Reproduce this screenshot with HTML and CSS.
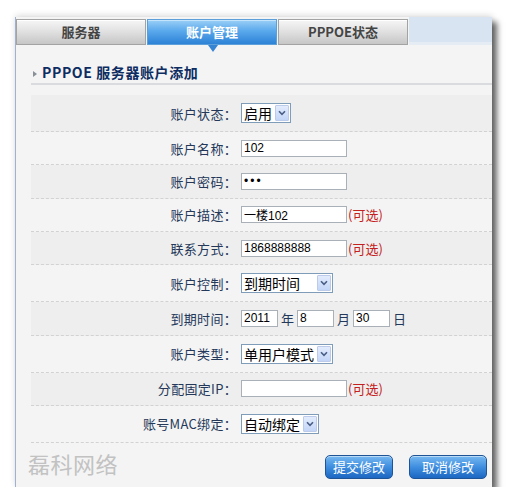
FILE: index.html
```html
<!DOCTYPE html>
<html lang="zh-CN">
<head>
  <meta charset="UTF-8" />
  <title>PPPOE 服务器账户添加</title>
  <link rel="stylesheet" href="styles.css">
</head>
<body>
  <div class="panel">
    <div class="tabs">
      <a class="tab" href="#">服务器</a>
      <a class="tab active" href="#">账户管理</a>
      <a class="tab" href="#">PPPOE状态</a>
      <div class="tab-fill"></div>
    </div>

    <div class="content">
      <h2 class="title"><span class="arrow-mark"></span>PPPOE 服务器账户添加</h2>

      <form class="form">
        <div class="row tall">
          <label>账户状态：</label>
          <div class="field">
            <span class="dd w50"><select><option>启用</option></select><span class="dd-btn"><svg width="8" height="6" viewBox="0 0 8 6"><path d="M1 1.2 L4 4.4 L7 1.2" fill="none" stroke="#4a5f86" stroke-width="1.6"/></svg></span></span>
          </div>
        </div>
        <div class="row">
          <label>账户名称：</label>
          <div class="field"><input class="txt" type="text" value="102"></div>
        </div>
        <div class="row">
          <label>账户密码：</label>
          <div class="field"><input class="txt" type="password" value="abc"></div>
        </div>
        <div class="row">
          <label>账户描述：</label>
          <div class="field"><input class="txt" type="text" value="一楼102"><span class="opt">(可选)</span></div>
        </div>
        <div class="row">
          <label>联系方式：</label>
          <div class="field"><input class="txt" type="text" value="1868888888"><span class="opt">(可选)</span></div>
        </div>
        <div class="row tall">
          <label>账户控制：</label>
          <div class="field">
            <span class="dd w92"><select><option>到期时间</option></select><span class="dd-btn"><svg width="8" height="6" viewBox="0 0 8 6"><path d="M1 1.2 L4 4.4 L7 1.2" fill="none" stroke="#4a5f86" stroke-width="1.6"/></svg></span></span>
          </div>
        </div>
        <div class="row">
          <label>到期时间：</label>
          <div class="field date">
            <input class="txt short" type="text" value="2011"><span class="unit">年</span>
            <input class="txt short" type="text" value="8"><span class="unit">月</span>
            <input class="txt short" type="text" value="30"><span class="unit">日</span>
          </div>
        </div>
        <div class="row tall">
          <label>账户类型：</label>
          <div class="field">
            <span class="dd w92"><select><option>单用户模式</option></select><span class="dd-btn"><svg width="8" height="6" viewBox="0 0 8 6"><path d="M1 1.2 L4 4.4 L7 1.2" fill="none" stroke="#4a5f86" stroke-width="1.6"/></svg></span></span>
          </div>
        </div>
        <div class="row">
          <label>分配固定IP：</label>
          <div class="field"><input class="txt" type="text" value=""><span class="opt">(可选)</span></div>
        </div>
        <div class="row tall">
          <label>账号MAC绑定：</label>
          <div class="field">
            <span class="dd w78"><select><option>自动绑定</option></select><span class="dd-btn"><svg width="8" height="6" viewBox="0 0 8 6"><path d="M1 1.2 L4 4.4 L7 1.2" fill="none" stroke="#4a5f86" stroke-width="1.6"/></svg></span></span>
          </div>
        </div>
      </form>

      <div class="footer">
        <span class="brand">磊科网络</span>
        <div class="btns">
          <button class="btn submit" type="button">提交修改</button>
          <button class="btn" type="button">取消修改</button>
        </div>
      </div>
    </div>
  </div>
</body>
</html>
```

FILE: styles.css
```css
* {
  margin: 0;
  padding: 0;
  box-sizing: border-box;
}

body {
  background: #fff;
  font-family: "Noto Sans CJK SC", "Liberation Sans", sans-serif;
  font-size: 13px;
  color: #24385a;
}

.panel {
  margin: 17px 0 0 15px;
  width: 477px;
  background: #f4f4f4;
  border-left: 1px solid #9db3cf;
  box-shadow: 5px 5px 6px rgba(0, 0, 0, 0.6), 0 -2px 6px rgba(0, 0, 0, 0.12);
}

/* tabs */
.tabs {
  display: flex;
  gap: 1px;
  height: 28px;
  align-items: flex-end;
  background: #f4f4f4;
}

.tab {
  position: relative;
  width: 130px;
  height: 26px;
  line-height: 24px;
  text-align: center;
  text-decoration: none;
  font-weight: bold;
  font-size: 13px;
  color: #444;
  border: 1px solid #a3a3a3;
  background: linear-gradient(#f6f6f6, #e2e2e2 45%, #c6c6c6);
  box-shadow: inset 0 1px 0 #fff;
}

.tab.active {
  color: #fff;
  border-color: #5d9fd8;
  background: linear-gradient(#9bd0f7, #5aa9ec 45%, #2c82d6);
  box-shadow: inset 0 1px 0 #c4e4fb;
}

.tab.active::after {
  content: "";
  position: absolute;
  left: 60px;
  bottom: -8px;
  border-left: 5px solid transparent;
  border-right: 5px solid transparent;
  border-top: 7px solid #3584d4;
}

.tab-fill {
  flex: 1;
  height: 28px;
  background: #d8e4f1;
  border-bottom: 3px solid #e6ecf3;
}

/* content */
.content {
  padding-left: 15px;
}

.title {
  height: 40px;
  padding-top: 16px;
  line-height: 22px;
  font-size: 14px;
  font-weight: bold;
  letter-spacing: 0.6px;
  color: #0c2c62;
  border-bottom: 2px solid #d9dbde;
  margin-bottom: 10px;
}

.arrow-mark {
  display: inline-block;
  margin: 0 5px 1px 2px;
  border-top: 3px solid transparent;
  border-bottom: 3px solid transparent;
  border-left: 4px solid #8a8f98;
  vertical-align: middle;
}

.row {
  display: grid;
  grid-template-columns: 206px 1fr;
  column-gap: 4px;
  align-items: center;
  height: 33.33px;
  border-bottom: 1px dashed #d2d2d2;
}

.row.tall {
  height: 37px;
}

.row:nth-child(odd) {
  background: #eeeeee;
}

.row label {
  text-align: right;
  color: #24385a;
  letter-spacing: 0.3px;
}

.field {
  display: flex;
  align-items: center;
}

.txt {
  width: 106px;
  height: 17px;
  border: 1px solid #a9b0b8;
  background: #fff;
  padding: 0 2px;
  font-family: "Liberation Sans", sans-serif;
  font-size: 12px;
  color: #000;
  outline: none;
}

.txt[type="password"] {
  font-size: 12px;
  letter-spacing: 2px;
}

.txt.short {
  width: 37px;
}

.unit {
  margin: 0 3px;
  color: #24385a;
}

.opt {
  margin-left: 1px;
  color: #c42020;
}

/* dropdown */
.dd {
  display: flex;
  align-items: center;
  height: 20px;
  border: 1px solid #7f9db9;
  background: #fff;
  padding-right: 1px;
}

.dd select {
  flex: 1;
  min-width: 0;
  appearance: none;
  border: none;
  background: transparent;
  padding-left: 2px;
  font-family: "Noto Sans CJK SC", sans-serif;
  font-size: 14px;
  line-height: 18px;
  color: #000;
  outline: none;
}

.dd-btn {
  display: flex;
  align-items: center;
  justify-content: center;
  width: 14px;
  height: 16px;
  border: 1px solid #bccbea;
  border-radius: 1px;
  background: linear-gradient(#e3ecfd, #c3d5f7);
}

.w50 { width: 50px; }
.w78 { width: 78px; }
.w92 { width: 92px; }

/* footer */
.footer {
  display: flex;
  justify-content: space-between;
  align-items: flex-start;
  height: 44px;
  margin-left: -3px;
  padding: 5px 5px 0 0;
}

.brand {
  font-size: 22px;
  line-height: 30px;
  color: #c2c2c2;
  letter-spacing: 0.5px;
}

.btns {
  display: flex;
  gap: 16px;
  margin-top: 7px;
}

.btn {
  width: 78px;
  height: 24px;
  border: 1px solid #1f5596;
  border-radius: 5px;
  background: linear-gradient(#77b9f0, #3f8ee0 50%, #1c67c2);
  box-shadow: inset 0 1px 0 rgba(255, 255, 255, 0.5);
  color: #fff;
  font-family: "Noto Sans CJK SC", sans-serif;
  font-size: 13px;
  cursor: pointer;
}

.btn.submit {
  width: 68px;
}
```
